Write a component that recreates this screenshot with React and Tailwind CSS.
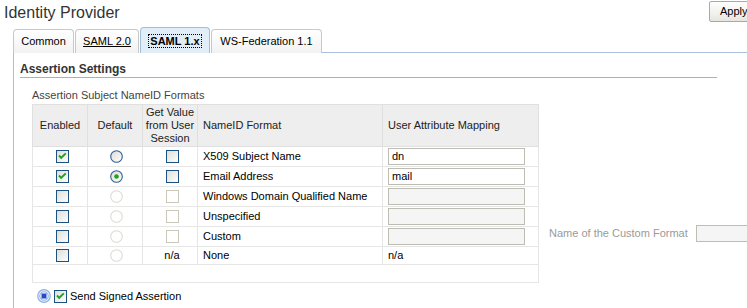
import React from "react";

const rows = [
  { en: true, def: "on", gv: "box", name: "X509 Subject Name", map: "dn", live: true },
  { en: true, def: "checked", gv: "box", name: "Email Address", map: "mail", live: true },
  { en: false, def: "off", gv: "off", name: "Windows Domain Qualified Name", map: "", live: false },
  { en: false, def: "off", gv: "off", name: "Unspecified", map: "", live: false },
  { en: false, def: "off", gv: "off", name: "Custom", map: "", live: false },
  { en: false, def: "off", gv: "n/a", name: "None", map: "n/a", live: false, short: true },
];

function Check({ checked, disabled }) {
  return (
    <svg width="13" height="13" viewBox="0 0 13 13" className="block">
      <defs>
        <linearGradient id="cbOn" x1="0" y1="0" x2="1" y2="1">
          <stop offset="0" stopColor="#dcdcd7" />
          <stop offset="1" stopColor="#ffffff" />
        </linearGradient>
      </defs>
      <rect
        x="0.5"
        y="0.5"
        width="12"
        height="12"
        fill={disabled ? "#ffffff" : "url(#cbOn)"}
        stroke={disabled ? "#cac8bb" : "#1c5180"}
      />
      {checked && (
        <path d="M3 5.5 L5.2 7.8 L9.8 3.4" fill="none" stroke="#21a121" strokeWidth="1.9" />
      )}
    </svg>
  );
}

function Radio({ state }) {
  const off = state === "off";
  return (
    <svg width="13" height="13" viewBox="0 0 13 13" className="block">
      <defs>
        <linearGradient id="rbOn" x1="0" y1="0" x2="1" y2="1">
          <stop offset="0" stopColor="#dcdcd7" />
          <stop offset="1" stopColor="#ffffff" />
        </linearGradient>
      </defs>
      <circle
        cx="6.5"
        cy="6.5"
        r="5.8"
        fill={off ? "#ffffff" : "url(#rbOn)"}
        stroke={off ? "#dcdcd2" : "#2f5f94"}
        strokeWidth="1.1"
      />
      {state === "checked" && <circle cx="6.5" cy="6.5" r="2.3" fill="#21a121" />}
    </svg>
  );
}

function FocusDot() {
  return (
    <svg width="14" height="14" viewBox="0 0 14 14" className="block">
      <circle cx="7" cy="7" r="6.3" fill="#eaf1fc" stroke="#8fb1e6" strokeWidth="1.2" />
      <circle cx="7" cy="7" r="4.2" fill="#ffffff" stroke="#6f95d8" strokeWidth="0.8" />
      <rect x="4.6" y="4.6" width="4.8" height="4.8" fill="#2b47c9" stroke="#8aa4ee" strokeWidth="0.8" />
    </svg>
  );
}

function Field({ value, live }) {
  return (
    <div
      className={
        "h-[17px] w-[137px] border border-[#bdbdb3] px-[3px] text-[11px] leading-[15px] text-black " +
        (live ? "bg-white" : "bg-[#f5f5f5]")
      }
    >
      {value}
    </div>
  );
}

function Tab({ label, width, active, underline }) {
  if (active) {
    return (
      <div
        className="flex h-[26px] items-center justify-center rounded-t-[4px] border border-b-0 border-[#a6bdd8] bg-[#e1eef8]"
        style={{ width }}
      >
        <span className="border border-dotted border-black px-[1px] text-[11px] font-bold leading-[12px] text-black">
          {label}
        </span>
      </div>
    );
  }
  return (
    <div
      className="flex h-[24px] items-center justify-center rounded-t-[4px] border border-b-0 border-[#c8c8c8] bg-gradient-to-b from-white to-[#f2f2f2]"
      style={{ width }}
    >
      <span className={"text-[11px] text-black " + (underline ? "underline" : "")}>{label}</span>
    </div>
  );
}

export default function App() {
  return (
    <div className="h-[308px] w-[747px] overflow-hidden bg-white font-['Liberation_Sans',Arial,sans-serif] text-[11px] text-black">
      <div className="flex h-[27px] items-start">
        <h1 className="ml-[4px] mt-[3px] text-[16px] leading-[20px] text-[#333]">Identity Provider</h1>
        <button className="ml-auto -mr-[10px] mt-[1px] h-[21px] w-[48px] shrink-0 rounded-[2px] border border-[#a9a9a9] bg-gradient-to-b from-white to-[#e6e6e0] pl-[10px] text-left text-[11px] text-black">
          Apply
        </button>
      </div>

      <div className="flex h-[26px] items-end pl-[13px]">
        <div className="flex items-end gap-[1px]">
          <Tab label="Common" width={61} />
          <Tab label="SAML 2.0" width={64} underline />
          <Tab label="SAML 1.x" width={70} active />
          <Tab label="WS-Federation 1.1" width={111} />
        </div>
        <div className="h-full flex-1 border-b border-[#a8c0dc]" />
      </div>

      <div className="ml-[13px] h-[255px] border-l border-[#a8c0dc] pl-[6px]">
        <div className="w-[697px] border-b border-[#b0b0b0] pt-[9px] text-[12px] font-bold leading-[15px] text-[#333]">
          Assertion Settings
        </div>

        <div className="ml-[12px] mt-[11px]">
          <div className="leading-[13px] text-[#444]">Assertion Subject NameID Formats</div>

          <div className="mt-[2px] flex items-start">
            <table className="w-[506px] shrink-0 table-fixed border-collapse border border-[#e2e2e2]">
              <colgroup>
                <col className="w-[55px]" />
                <col className="w-[55px]" />
                <col className="w-[55px]" />
                <col className="w-[185px]" />
                <col className="w-[156px]" />
              </colgroup>
              <thead>
                <tr className="h-[42px] bg-[#eeeeee] text-[#222]">
                  <th className="border border-[#e0e0e0] font-normal">Enabled</th>
                  <th className="border border-[#e0e0e0] font-normal">Default</th>
                  <th className="border border-[#e0e0e0] font-normal leading-[13px]">
                    Get Value
                    <br />
                    from User
                    <br />
                    Session
                  </th>
                  <th className="border border-[#e0e0e0] pl-[5px] text-left font-normal">NameID Format</th>
                  <th className="border border-[#e0e0e0] pl-[5px] text-left font-normal">User Attribute Mapping</th>
                </tr>
              </thead>
              <tbody>
                {rows.map((r) => (
                  <tr key={r.name} className={r.short ? "h-[18px]" : "h-[20px]"}>
                    <td className="border border-[#e6e6e6]">
                      <div className="flex justify-center pl-[5px]">
                        <Check checked={r.en} />
                      </div>
                    </td>
                    <td className="border border-[#e6e6e6]">
                      <div className="flex justify-center pl-[3px]">
                        <Radio state={r.def} />
                      </div>
                    </td>
                    <td className="border border-[#e6e6e6]">
                      <div className="flex justify-center pl-[4px]">
                        {r.gv === "n/a" ? <span>n/a</span> : <Check disabled={r.gv === "off"} />}
                      </div>
                    </td>
                    <td className="border border-[#e6e6e6] pl-[5px]">{r.name}</td>
                    <td className="border border-[#e6e6e6] pl-[5px]">
                      {r.map === "n/a" ? <span>n/a</span> : <Field value={r.map} live={r.live} />}
                    </td>
                  </tr>
                ))}
                <tr className="h-[18px]">
                  <td colSpan={5} className="border border-[#e6e6e6]" />
                </tr>
              </tbody>
            </table>

            <div className="ml-[10px] mt-[121px] flex shrink-0 items-center">
              <span className="text-[#9a9a9a]">Name of the Custom Format</span>
              <div className="ml-[8px] h-[17px] w-[70px] shrink-0 border border-[#bdbdb3] bg-[#f5f5f5]" />
            </div>
          </div>

          <div className="mt-[5px] flex items-center pl-[5px]">
            <FocusDot />
            <div className="ml-[3px]">
              <Check checked />
            </div>
            <span className="ml-[3px]">Send Signed Assertion</span>
          </div>
        </div>
      </div>
    </div>
  );
}
